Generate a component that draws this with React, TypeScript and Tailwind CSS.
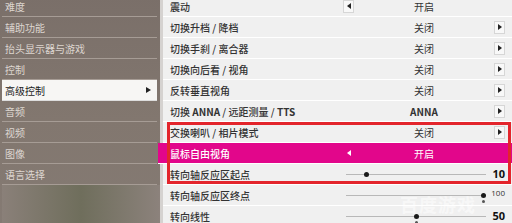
import React from "react";

const font = { fontFamily: '"Noto Sans CJK SC", "Noto Sans", sans-serif' };

const sideItems = ["难度", "辅助功能", "抬头显示器与游戏", "控制", "高级控制", "音频", "视频", "图像", "语言选择"];

function Btn({ dir }: { dir: "l" | "r" }) {
  return (
    <div className="w-[11px] h-[13px] bg-[#f8f8f8] border border-[#d6d6d6] flex items-center justify-center">
      <div
        className={
          dir === "l"
            ? "w-0 h-0 border-y-[3px] border-y-transparent border-r-[4px] border-r-[#222]"
            : "w-0 h-0 border-y-[3px] border-y-transparent border-l-[4px] border-l-[#222]"
        }
      />
    </div>
  );
}

function Toggle({ value, left, right, bold }: { value: string; left?: boolean; right?: boolean; bold?: boolean }) {
  return (
    <div className="flex items-center w-[162px]">
      <div className="w-[11px]">{left && <Btn dir="l" />}</div>
      <div className={"flex-1 text-center text-[10px] text-[#333] " + (bold ? "font-bold" : "")}>{value}</div>
      <div className="w-[11px]">{right && <Btn dir="r" />}</div>
    </div>
  );
}

function Slider({ pct, value, small, tick }: { pct: number; value: string; small?: boolean; tick?: boolean }) {
  return (
    <div className="flex items-center w-[162px]">
      <div className="relative w-[140px] h-[10px] ml-[3px]">
        <div className="absolute left-0 right-0 top-[5px] h-px bg-[#b8b8b8]" />
        <div
          className="absolute top-[3px] w-[5px] h-[5px] rounded-full bg-[#1a1a1a]"
          style={{ left: `calc(${pct}% - 2px)` }}
        />
        {tick && (
          <div
            className="absolute top-[10px] w-[3px] h-[3px] rounded-full bg-[#555]"
            style={{ left: `calc(${pct}% - 1px)` }}
          />
        )}
      </div>
      <div
        className={"flex-1 text-right " + (small ? "text-[8px] text-[#333] -mt-[5px]" : "text-[11px] font-bold text-[#111]")}
        style={{ fontFamily: '"Open Sans", "Noto Sans", sans-serif' }}
      >
        {value}
      </div>
    </div>
  );
}

function Row({ label, children, pink }: { label: React.ReactNode; children: React.ReactNode; pink?: boolean }) {
  return (
    <div
      className={
        "h-[21px] flex items-center border-b border-white " +
        (pink ? "bg-[#e2068b] text-white -ml-[5px] pl-[12px]" : "pl-[7px] text-[#333]")
      }
    >
      <div className="w-[173px] text-[10px] font-medium whitespace-nowrap">{label}</div>
      {children}
    </div>
  );
}

export default function App() {
  return (
    <div className="w-[512px] h-[223px] overflow-hidden relative bg-[#7d726c]" style={font}>
      <div className="flex -mt-[4px]">
        {/* Sidebar */}
        <div className="w-[160px] shrink-0 bg-gradient-to-b from-[#7a6f69] via-[#82776f] to-[#857b74] pl-[2px]">
          {sideItems.map((s, i) => (
            <div
              key={s}
              className={
                "h-[21px] flex items-center justify-between pl-[3px] pr-[6px] border-b mr-[3px] " +
                (i === 4 ? "bg-[#f7f6f4] text-[#222] border-[#ddd]" : "text-[#ddd6d0] border-[#a69c95]")
              }
            >
              <span className="text-[10px]">{s}</span>
              {i === 4 && (
                <div className="w-0 h-0 border-y-[3px] border-y-transparent border-l-[5px] border-l-[#222]" />
              )}
            </div>
          ))}
          <div className="h-[60px] bg-gradient-to-r from-[#8a8079] via-[#6f6e5c] to-[#8c827c] border-b border-[#a69c95]" />
        </div>
        {/* Right panel */}
        <div className="flex-1 bg-[#f0f0f0] border-l-[3px] border-[#d5d2d0]">
          <Row label="震动">
            <Toggle value="开启" left />
          </Row>
          <Row label="切换升档 / 降档">
            <Toggle value="关闭" right />
          </Row>
          <Row label="切换手刹 / 离合器">
            <Toggle value="关闭" right />
          </Row>
          <Row label="切换向后看 / 视角">
            <Toggle value="关闭" right />
          </Row>
          <Row label="反转垂直视角">
            <Toggle value="关闭" right />
          </Row>
          <Row
            label={
              <span>
                切换 <b>ANNA</b> / 远距测量 / <b>TTS</b>
              </span>
            }
          >
            <Toggle value="ANNA" right bold />
          </Row>
          <Row label="交换喇叭 / 相片模式">
            <Toggle value="关闭" right />
          </Row>
          <Row label="鼠标自由视角" pink>
            <div className="flex items-center w-[162px]">
              <div className="w-[11px] flex justify-center">
                <div className="w-0 h-0 border-y-[3px] border-y-transparent border-r-[4px] border-r-white" />
              </div>
              <div className="flex-1 text-center text-[10px] text-white">开启</div>
              <div className="w-[11px]" />
            </div>
          </Row>
          <Row label="转向轴反应区起点">
            <Slider pct={14} value="10" />
          </Row>
          <Row label="转向轴反应区终点">
            <Slider pct={98} value="100" small tick />
          </Row>
          <Row label="转向线性">
            <Slider pct={50} value="50" tick />
          </Row>
        </div>
      </div>
      {/* Red annotation box */}
      <div className="absolute left-[167px] top-[122px] w-[344px] h-[62px] border-[3px] border-[#e3252c] pointer-events-none" />
      {/* Watermark */}
      <div className="absolute left-[400px] top-[191px] text-[18px] font-bold text-white/50 tracking-[1px] pointer-events-none">
        百度游戏
      </div>
    </div>
  );
}
